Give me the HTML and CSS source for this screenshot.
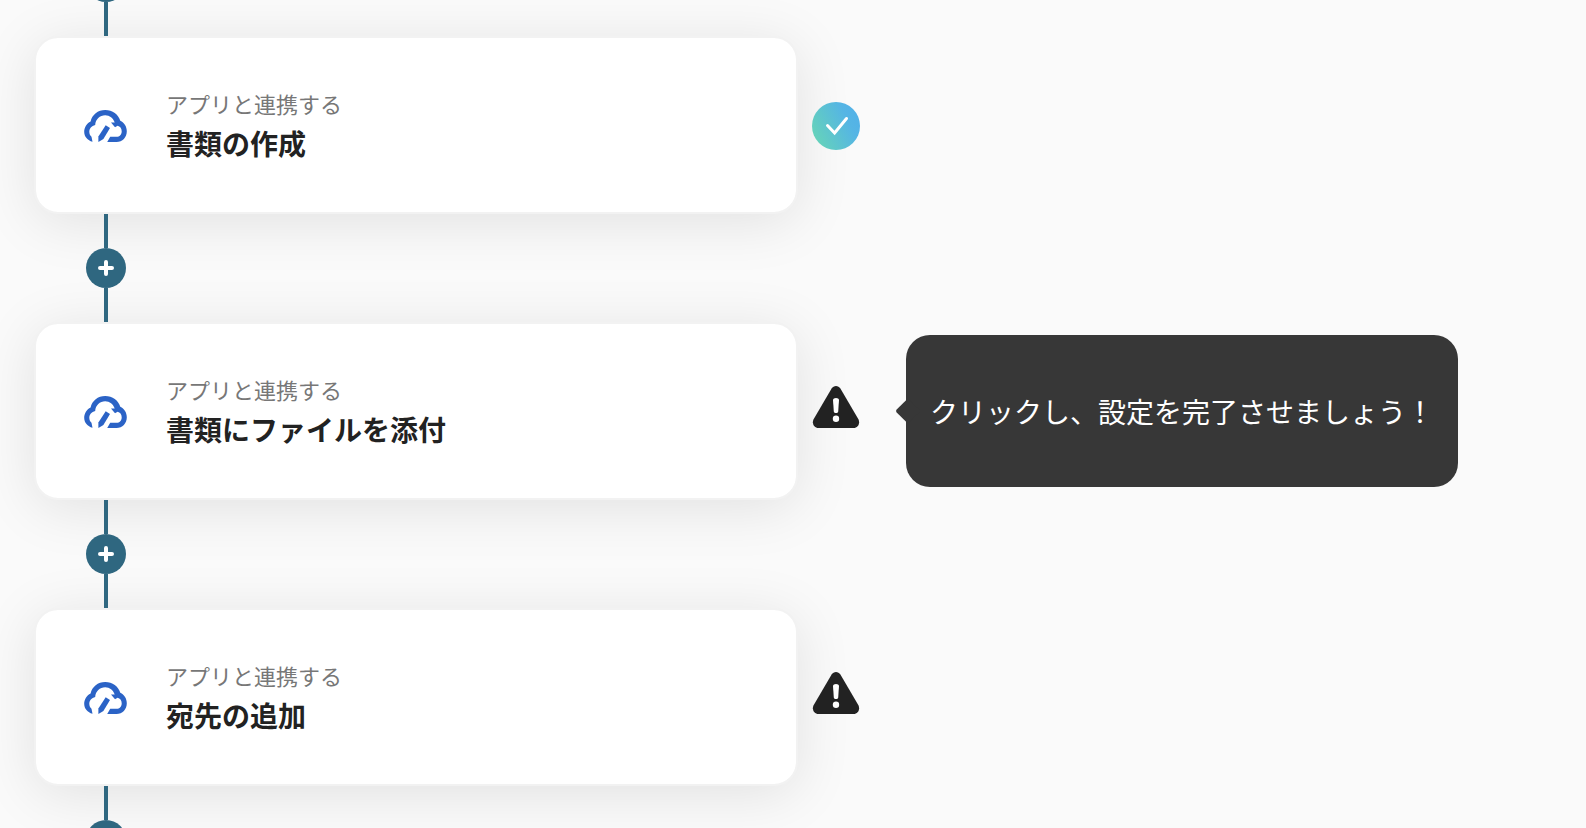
FILE: index.html
```html
<!DOCTYPE html>
<html lang="ja">
<head>
<meta charset="utf-8">
<meta name="viewport" content="width=device-width, initial-scale=1">
<title>ワークフロー</title>
<link rel="stylesheet" href="styles.css">
</head>
<body>
<svg class="defs" width="0" height="0" aria-hidden="true">
  <defs>
    <linearGradient id="done-fill" x1="0" y1="0.75" x2="1" y2="0.25">
      <stop offset="0" stop-color="#66d4b8"/>
      <stop offset="0.75" stop-color="#55b5e4"/>
      <stop offset="1" stop-color="#52b1e8"/>
    </linearGradient>
    <symbol id="cloud" viewBox="0 -2 44 34">
      <path d="M8.500 31.800C3.600 30.600 .2 26.600 .2 21.800C.2 17.300 2.700 13.300 6.600 11.400C8 4.800 13.900 0 21.200 0C28.500 0 34.500 4.500 36.300 10.800C40.300 12.600 42.800 16.700 42.800 21.200C42.800 27.200 38.500 32 32.500 32H23.200L26.200 26.800H32.500C35.700 26.800 37.700 24.300 37.700 21.200C37.700 18.400 36 16.300 33.600 15.800L31 17.200L27 12.400H30.700C29.200 8.100 25.700 5.200 21.200 5.200C15.900 5.200 11.500 9.200 11.200 15C7.500 16 5.300 18.600 5.300 21.800C5.300 24 6.200 25.600 7.500 26.800Z" fill="#2b63c6"/>
      <path d="M21.700 15.300L26 18L19.400 29L14.400 32V26.600Z" fill="#2b63c6"/>
    </symbol>
    <symbol id="plus" viewBox="0 0 16 16">
      <path d="M8 2V14M2 8H14" fill="none" stroke="#fff" stroke-width="4" stroke-linecap="round"/>
    </symbol>
    <symbol id="warning" viewBox="0 0 48 56">
      <path d="M19.600 5.500C21.600 2.100 26.400 2.100 28.400 5.500L46.400 36.300C48.400 40 46 45 41.500 45H6.500C2 45-.4 40 1.600 36.300Z" fill="#222"/>
      <path d="M21 17C20.900 14.200 27.100 14.200 27 17L26.200 28.500C26 30.500 22 30.500 21.800 28.500Z" fill="#fff"/>
      <circle cx="24" cy="35.800" r="3.200" fill="#fff"/>
    </symbol>
  </defs>
</svg>
<main class="flow">
  <div class="connector"><button class="add" type="button" aria-label="ステップを追加"><svg class="add-icon"><use href="#plus"/></svg></button></div>
  <section class="step">
    <article class="card">
      <svg class="app-icon" aria-hidden="true"><use href="#cloud"/></svg>
      <div class="text">
        <p class="label">アプリと連携する</p>
        <h2 class="title">書類の作成</h2>
      </div>
    </article>
    <svg class="status" viewBox="0 0 48 50" width="48" height="50" role="img" aria-label="完了">
      <circle cx="24" cy="26" r="24" fill="url(#done-fill)"/>
      <path d="M15.500 25.500L22.600 33L34.500 18.500" fill="none" stroke="#fff" stroke-width="3" stroke-linecap="round"/>
    </svg>
  </section>
  <div class="connector"><button class="add" type="button" aria-label="ステップを追加"><svg class="add-icon"><use href="#plus"/></svg></button></div>
  <section class="step">
    <article class="card">
      <svg class="app-icon" aria-hidden="true"><use href="#cloud"/></svg>
      <div class="text">
        <p class="label">アプリと連携する</p>
        <h2 class="title">書類にファイルを添付</h2>
      </div>
    </article>
    <svg class="status" width="48" height="56" role="img" aria-label="未設定"><use href="#warning"/></svg>
    <div class="tip" role="tooltip">クリックし、設定を完了させましょう！</div>
  </section>
  <div class="connector"><button class="add" type="button" aria-label="ステップを追加"><svg class="add-icon"><use href="#plus"/></svg></button></div>
  <section class="step">
    <article class="card">
      <svg class="app-icon" aria-hidden="true"><use href="#cloud"/></svg>
      <div class="text">
        <p class="label">アプリと連携する</p>
        <h2 class="title">宛先の追加</h2>
      </div>
    </article>
    <svg class="status" width="48" height="56" role="img" aria-label="未設定"><use href="#warning"/></svg>
  </section>
  <div class="connector"><button class="add" type="button" aria-label="ステップを追加"><svg class="add-icon"><use href="#plus"/></svg></button></div>
</main>
</body>
</html>
```
FILE: styles.css
```css
* {
  box-sizing: border-box;
}

body {
  margin: 0;
  height: 100vh;
  overflow: hidden;
  background: #fafafa;
  color: #222;
  font-family: "Noto Sans CJK JP", sans-serif;
}

.defs {
  position: absolute;
}

/* The list is scrolled so that the first connector is partly out of view. */
.flow {
  display: flex;
  flex-direction: column;
  margin-top: -72px;
  padding-left: 34px;
}

.step {
  display: flex;
  align-items: center;
  gap: 14px;
}

.card {
  display: flex;
  align-items: center;
  gap: 38px;
  flex: 0 1 764px;
  min-height: 178px;
  padding: 24px 48px;
  border: 2px solid #f2f2f2;
  border-radius: 24px;
  background: #fff;
  background-clip: padding-box;
  box-shadow: 0 8px 56px rgba(0, 0, 0, 0.1);
}

.app-icon {
  flex: none;
  width: 44px;
  height: 34px;
}

.text {
  display: grid;
  gap: 4px;
}

.label {
  margin: 0;
  color: #777;
  font-size: 22px;
  line-height: 32px;
}

.title {
  margin: 0;
  font-size: 28px;
  font-weight: 700;
  line-height: 40px;
}

.status {
  position: relative;
  flex: none;
}

.connector {
  position: relative;
  display: flex;
  flex-direction: column;
  align-items: center;
  align-self: flex-start;
  width: 40px;
  height: 108px;
  margin-left: 52px;
}

.connector::before,
.connector::after {
  content: "";
  flex: 1;
  width: 4px;
  background: #2f6780;
}

.add {
  display: grid;
  place-items: center;
  width: 40px;
  height: 40px;
  padding: 0;
  border: 0;
  border-radius: 50%;
  background: #2f6780;
  cursor: pointer;
}

.add-icon {
  width: 16px;
  height: 16px;
}

.tip {
  position: relative;
  flex: none;
  margin-left: 32px;
  padding: 56px 24px;
  border-radius: 24px;
  background: #373737;
  color: #fff;
  font-size: 28px;
  line-height: 40px;
  white-space: nowrap;
}

.tip::before {
  content: "";
  position: absolute;
  top: 50%;
  left: -7px;
  width: 18px;
  height: 18px;
  margin-top: -9px;
  border-radius: 2px;
  background: #373737;
  transform: rotate(45deg);
}
```
